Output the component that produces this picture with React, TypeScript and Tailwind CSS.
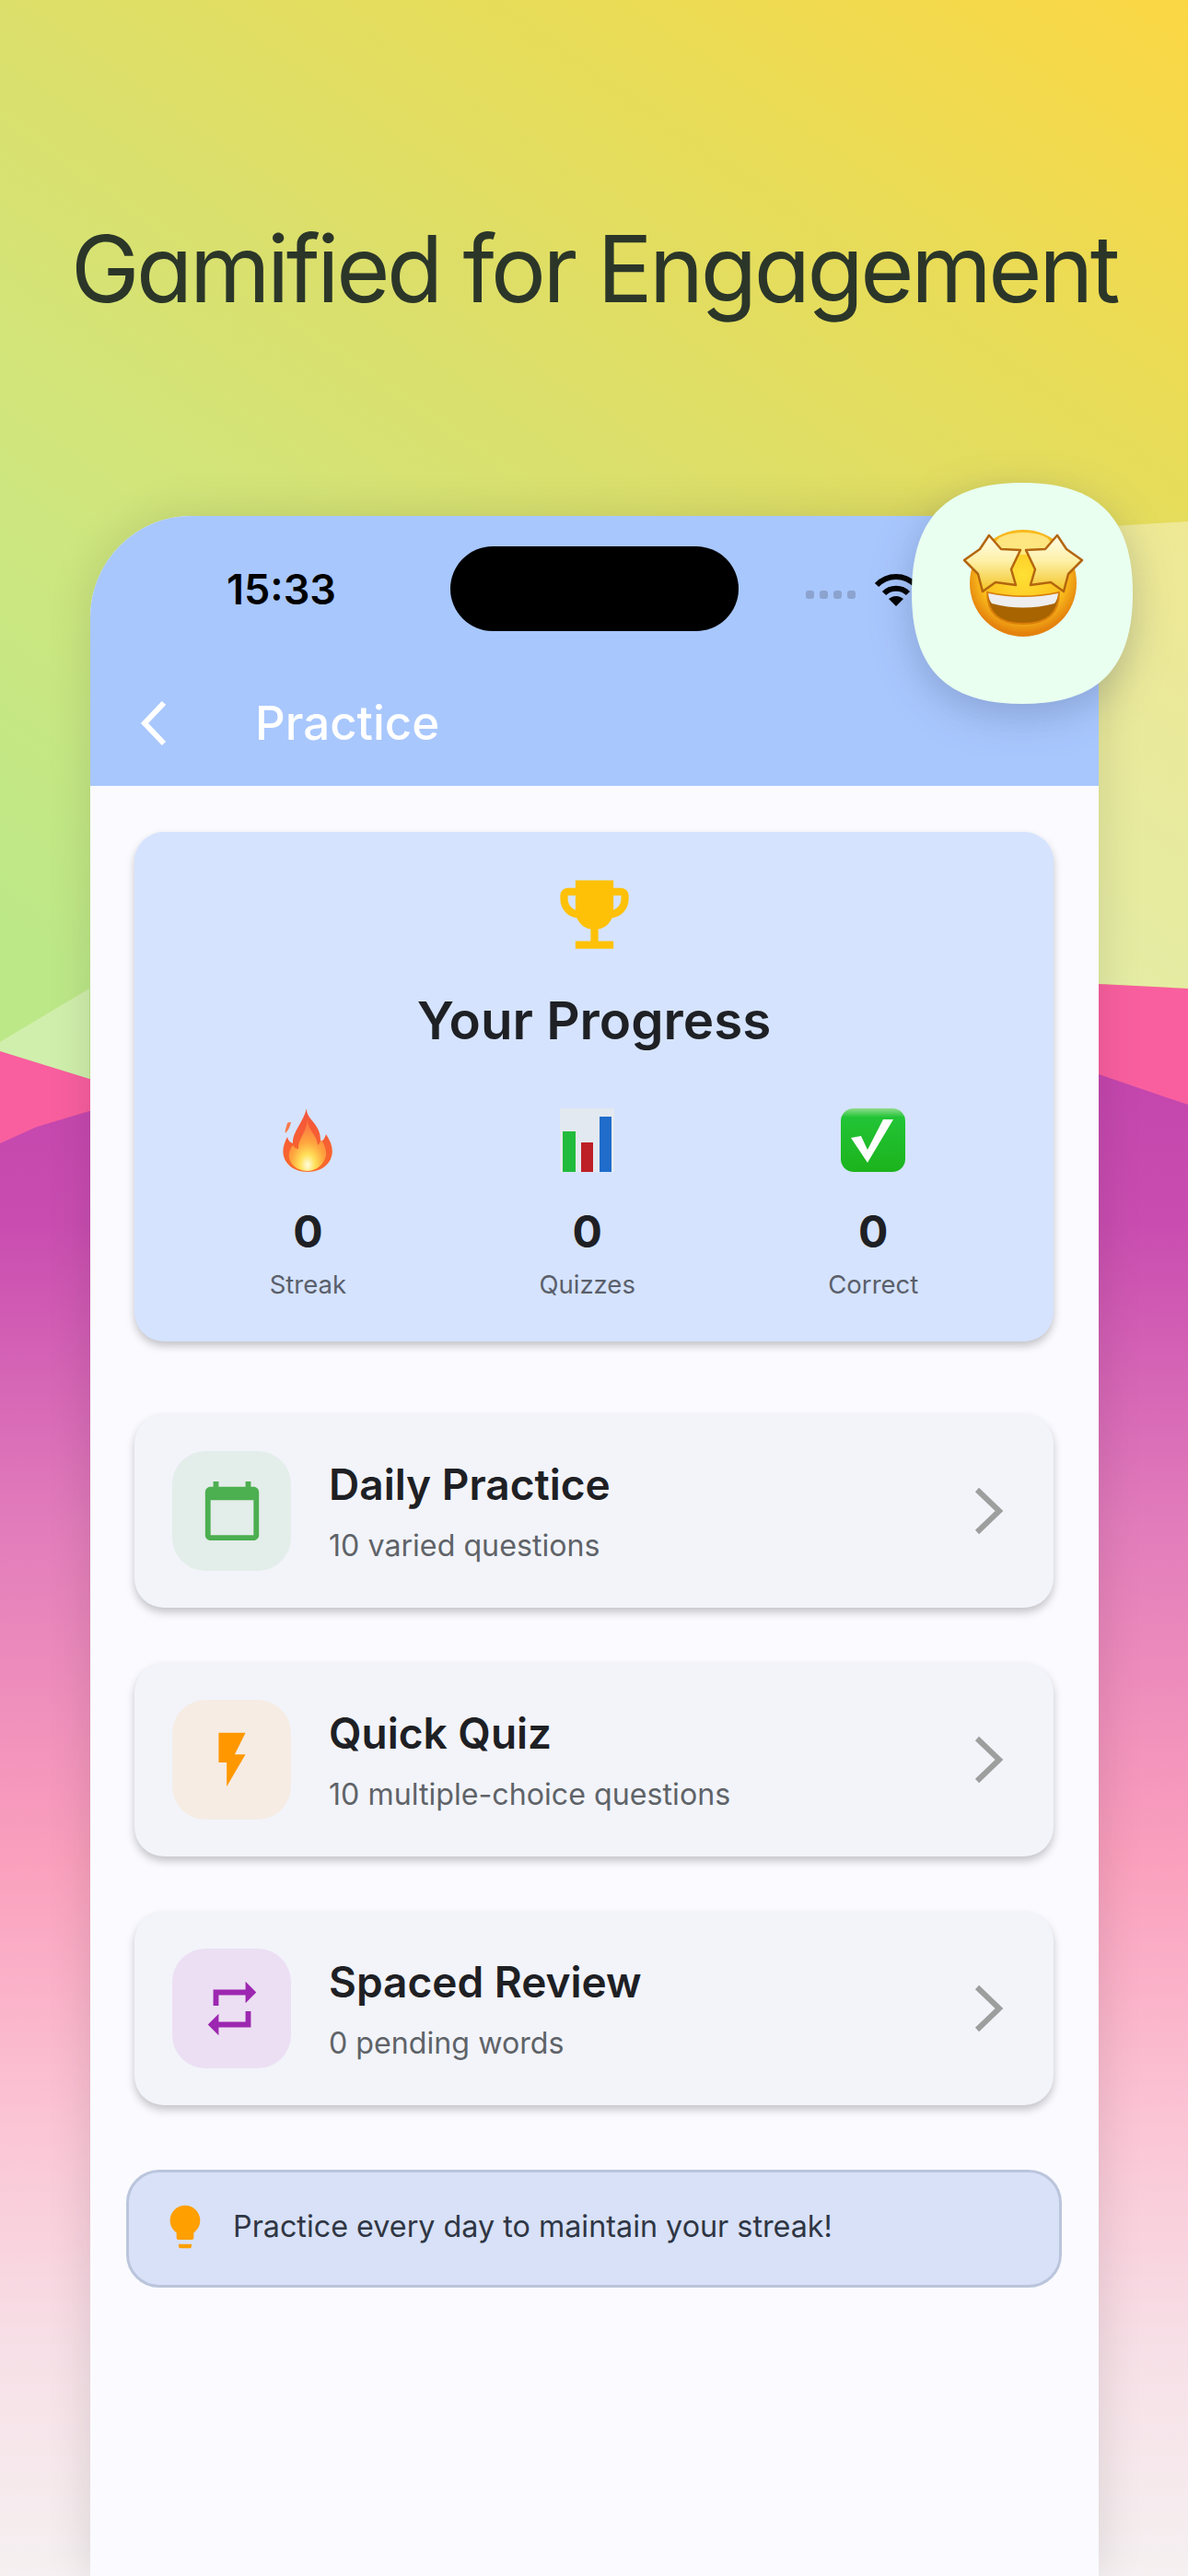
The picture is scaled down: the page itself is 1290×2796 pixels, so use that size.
import React from "react";

const rows = [
  {
    title: "Daily Practice",
    sub: "10 varied questions",
    box: "bg-[#e3ede9]",
    color: "#4caf50",
    d: "M20 3h-1V1h-2v2H7V1H5v2H4c-1.1 0-2 .9-2 2v16c0 1.1.9 2 2 2h16c1.1 0 2-.9 2-2V5c0-1.1-.9-2-2-2zm0 18H4V8h16v13z",
  },
  {
    title: "Quick Quiz",
    sub: "10 multiple-choice questions",
    box: "bg-[#f6ece4]",
    color: "#ff9800",
    d: "M7 2v11h3v9l7-12h-4l4-8z",
  },
  {
    title: "Spaced Review",
    sub: "0 pending words",
    box: "bg-[#ecdff3]",
    color: "#9c27b0",
    d: "M7 7h10v3l4-4-4-4v3H5v6h2V7zm10 10H7v-3l-4 4 4 4v-3h12v-6h-2v4z",
  },
];

const Background = () => (
  <svg className="absolute inset-0" width="1290" height="2796" viewBox="0 0 1290 2796">
    <defs>
      <linearGradient id="low" x1="0" y1="1166" x2="0" y2="2796" gradientUnits="userSpaceOnUse">
        <stop offset="0" stopColor="#c446ae" />
        <stop offset="0.1" stopColor="#c94db0" />
        <stop offset="0.3" stopColor="#e27cbb" />
        <stop offset="0.52" stopColor="#fa9fbd" />
        <stop offset="0.7" stopColor="#fbc5d6" />
        <stop offset="0.85" stopColor="#f7e0e7" />
        <stop offset="1" stopColor="#f5f0f1" />
      </linearGradient>
    </defs>
    <polygon points="0,1131 97,1073 97,1171 0,1141" fill="#ffffff" fillOpacity="0.3" />
    <polygon points="1193,572 1290,566 1290,1073 1193,1068" fill="#ffffff" fillOpacity="0.35" />
    <polygon points="0,1141 97,1171 1193,1068 1290,1073 1290,2796 0,2796" fill="#f95f9f" />
    <polygon points="0,1241 40,1223 97,1206 1193,1166 1290,1199 1290,2796 0,2796" fill="url(#low)" />
  </svg>
);

const Wifi = () => (
  <svg width="50" height="40" viewBox="0 0 50 40" className="ml-[19px] mt-[6px]" fill="none">
    <path d="M4 13 C16 1 34 1 46 13" stroke="#000" strokeWidth="6" />
    <path d="M12 22 C19 15 31 15 38 22" stroke="#000" strokeWidth="6" />
    <path d="M17 28 L25 36 L33 28 C28 24 22 24 17 28 Z" fill="#000" />
  </svg>
);

const StarBubble = () => {
  const star = "84,57 97,72 118,73 108,94 113,111 91,108 77,118 72,99 57,84 74,72";
  return (
    <svg
      className="absolute left-[892px] top-[-36px] drop-shadow-[0_12px_22px_rgba(40,50,90,0.25)]"
      width="240"
      height="240"
      viewBox="0 0 240 240"
    >
      <defs>
        <radialGradient id="face" cx="0.5" cy="0.42" r="0.55">
          <stop offset="0" stopColor="#ffe035" />
          <stop offset="0.72" stopColor="#fbbf1d" />
          <stop offset="1" stopColor="#e4820d" />
        </radialGradient>
        <linearGradient id="star" x1="0" y1="0" x2="0" y2="1">
          <stop offset="0" stopColor="#fffdeb" />
          <stop offset="0.45" stopColor="#fdf0a8" />
          <stop offset="1" stopColor="#f3c322" />
        </linearGradient>
      </defs>
      <path d="M120 0 C202 0 240 38 240 120 C240 202 202 240 120 240 C38 240 0 202 0 120 C0 38 38 0 120 0 Z" fill="#e9fff0" />
      <circle cx="121" cy="109" r="58" fill="url(#face)" />
      <ellipse cx="121" cy="66" rx="30" ry="12" fill="#fff3a8" fillOpacity="0.7" />
      <path d="M82 119 Q121 128 160 119 Q160 153 121 153 Q82 153 82 119 Z" fill="#a86400" stroke="#d97f0a" strokeWidth="2" />
      <path d="M83 120 Q121 128 159 120 Q158 128 155 131 Q121 140 87 131 Q84 128 83 120 Z" fill="#eeeeee" />
      <polygon points={star} fill="url(#star)" stroke="#b4660e" strokeWidth="2.5" strokeLinejoin="round" />
      <polygon points={star} fill="url(#star)" stroke="#b4660e" strokeWidth="2.5" strokeLinejoin="round" transform="translate(242 0) scale(-1 1)" />
    </svg>
  );
};

const Flame = () => (
  <svg width="55" height="69" viewBox="0 0 55 69">
    <defs>
      <linearGradient id="fl" x1="0" y1="0" x2="0" y2="1">
        <stop offset="0" stopColor="#f4553c" />
        <stop offset="1" stopColor="#f9692a" />
      </linearGradient>
      <radialGradient id="fc" cx="0.5" cy="0.88" r="0.72">
        <stop offset="0" stopColor="#fffde0" />
        <stop offset="0.28" stopColor="#ffe15a" />
        <stop offset="0.62" stopColor="#ffa53e" />
        <stop offset="1" stopColor="#fb7f42" />
      </radialGradient>
    </defs>
    <path d="M5 16 C4 20 2 24 3 27 C6 24 8 20 9 15 C8 15 6 15 5 16 Z" fill="#f97a4a" />
    <path d="M26 0 C25 10 37 15 40 27 C41 31 41 34 41 37 C44 35 46 32 47 28 C53 37 56 46 52 55 C48 64 38 69 27 69 C15 69 4 63 1 52 C-1 44 2 37 5 31 C6 35 8 37 11 38 C10 26 22 16 26 0 Z" fill="url(#fl)" />
    <path d="M27 12 C27 24 37 28 38 40 C40 38 41 36 42 34 C47 42 49 50 45 57 C41 64 34 68 27 68 C19 68 11 64 8 57 C5 50 8 44 11 40 C13 43 15 44 17 44 C16 34 26 26 27 12 Z" fill="url(#fc)" />
  </svg>
);

const BarChart = () => (
  <svg width="59" height="69" viewBox="0 0 59 69">
    <rect width="59" height="69" fill="#e3e9f0" />
    <rect x="3" y="25" width="14" height="44" fill="#22bb3c" />
    <rect x="23" y="37" width="13" height="32" fill="#bd2026" />
    <rect x="43" y="9" width="13" height="60" fill="#1f6ccb" />
  </svg>
);

const CheckBox = () => (
  <svg width="70" height="69" viewBox="0 0 70 69">
    <defs>
      <linearGradient id="cb" x1="0" y1="0" x2="0" y2="1">
        <stop offset="0" stopColor="#8fdc8e" />
        <stop offset="0.14" stopColor="#22c436" />
        <stop offset="1" stopColor="#1cb31c" />
      </linearGradient>
    </defs>
    <rect width="70" height="69" rx="14" fill="url(#cb)" />
    <path d="M11 32 L22 30 L29 45 L46 12 L57 12 L29 59 Z" fill="#ffffff" />
  </svg>
);

const Stat = ({ icon, label }: { icon: React.ReactNode; label: string }) => (
  <div className="flex flex-col items-center">
    <div className="flex h-[69px] items-center justify-center">{icon}</div>
    <div className="mt-[36px] text-[48px] leading-[58px] font-bold text-[#1e2024]">0</div>
    <div className="mt-[11px] text-[27.5px] leading-[34px] text-[#5a5f6b]">{label}</div>
  </div>
);

const Chevron = () => (
  <svg width="36" height="56" viewBox="0 0 36 56" fill="none">
    <path d="M6 5 L30 28 L6 51" stroke="#9e9e9e" strokeWidth="6" />
  </svg>
);

export default function App() {
  return (
    <div className="relative flex h-[2796px] w-[1290px] flex-col overflow-hidden bg-[linear-gradient(215deg,#fbd744_0%,#e8dc58_13.5%,#dcdf6a_24.4%,#cfe67e_38%,#bde888_51.4%,#b8ea8c_100%)] [font-family:Inter,sans-serif]">
      <Background />

      <div className="relative flex h-[560px] justify-center pt-[232px]">
        <h1 className="text-[100px] leading-[120px] font-[420] tracking-[-3.45px] whitespace-nowrap text-[#2b3629] [font-feature-settings:'cv11']">
          Gamified for Engagement
        </h1>
      </div>

      <div className="relative ml-[98px] flex w-[1095px] flex-1 flex-col rounded-t-[110px] bg-[#fafaff] shadow-[0_0_50px_rgba(0,0,0,0.12)]">
        <header className="h-[293px] rounded-t-[110px] bg-[#a8c7fd] pt-[33px]">
          <div className="flex h-[92px] items-center">
            <div className="w-[391px] pt-[2px] pl-[148px] text-[45px] leading-[52px] font-semibold text-black">15:33</div>
            <div className="h-[92px] w-[313px] rounded-[46px] bg-black" />
            <div className="ml-[73px] flex gap-[6px] pt-[12px]">
              <span className="h-[9px] w-[9px] rounded-[3px] bg-[#8ca3cf]" />
              <span className="h-[9px] w-[9px] rounded-[3px] bg-[#8ca3cf]" />
              <span className="h-[9px] w-[9px] rounded-[3px] bg-[#8ca3cf]" />
              <span className="h-[9px] w-[9px] rounded-[3px] bg-[#8ca3cf]" />
            </div>
            <Wifi />
          </div>
          <div className="mt-[70px] flex h-[60px] items-center pl-[51px]">
            <svg width="36" height="52" viewBox="0 0 36 52" fill="none">
              <path d="M29 4 L8 26 L29 48" stroke="#ffffff" strokeWidth="6" />
            </svg>
            <span className="ml-[92px] text-[51px] leading-[60px] font-medium text-white">Practice</span>
          </div>
        </header>

        <main className="flex flex-col pt-[50px]">
          <section className="mx-[48px] flex h-[553px] w-[998px] flex-col rounded-[32px] bg-[#d5e3fe] pt-[40px] shadow-[0_5px_10px_rgba(0,0,0,0.22)]">
            <svg className="self-center" width="99" height="99" viewBox="0 0 24 24" fill="#ffc107">
              <path d="M19 5h-2V3H7v2H5c-1.1 0-2 .9-2 2v1c0 2.55 1.92 4.63 4.39 4.94.63 1.5 1.98 2.63 3.61 2.96V19H7v2h10v-2h-4v-3.1c1.63-.33 2.98-1.46 3.61-2.96C19.08 12.63 21 10.55 21 8V7c0-1.1-.9-2-2-2zM5 8V7h2v3.82C5.84 10.4 5 9.3 5 8zm14 0c0 1.3-.84 2.4-2 2.82V7h2v1z" />
            </svg>
            <h2 className="mt-[34px] text-center text-[56.5px] leading-[64px] font-semibold text-[#1e2024]">Your Progress</h2>
            <div className="mt-[63px] flex justify-around px-[42px]">
              <Stat icon={<Flame />} label="Streak" />
              <Stat icon={<BarChart />} label="Quizzes" />
              <Stat icon={<CheckBox />} label="Correct" />
            </div>
          </section>

          <div className="mx-[48px] mt-[79px] flex w-[998px] flex-col gap-[60px]">
            {rows.map((row) => (
              <div
                key={row.title}
                className="flex h-[210px] items-center rounded-[32px] bg-[#f2f4fa] pr-[53px] pl-[41px] shadow-[0_5px_10px_rgba(0,0,0,0.22)]"
              >
                <div className={`flex h-[130px] w-[129px] items-center justify-center rounded-[36px] ${row.box}`}>
                  <svg width="70" height="70" viewBox="0 0 24 24" fill={row.color}>
                    <path d={row.d} />
                  </svg>
                </div>
                <div className="ml-[41px] flex-1 pb-[2px]">
                  <div className="text-[46px] leading-[58px] font-semibold text-[#1e2024]">{row.title}</div>
                  <div className="mt-[20px] text-[32.2px] leading-[36px] text-[#5f6368]">{row.sub}</div>
                </div>
                <Chevron />
              </div>
            ))}
          </div>

          <div className="mx-[39px] mt-[70px] flex h-[128px] w-[1016px] items-center rounded-[36px] border-[3px] border-[#bac5dc] bg-[#d8e1f8] pb-[4px] pl-[33px]">
            <svg width="56" height="56" viewBox="0 0 24 24" fill="#ff9f00">
              <path d="M9 21c0 .55.45 1 1 1h4c.55 0 1-.45 1-1v-1H9v1zm3-19C8.14 2 5 5.14 5 9c0 2.38 1.19 4.47 3 5.74V17c0 .55.45 1 1 1h6c.55 0 1-.45 1-1v-2.26c1.81-1.27 3-3.36 3-5.74 0-3.86-3.14-7-7-7z" />
            </svg>
            <span className="ml-[24px] text-[32.3px] leading-[36px] text-[#2f3644]">Practice every day to maintain your streak!</span>
          </div>
        </main>

        <StarBubble />
      </div>
    </div>
  );
}
